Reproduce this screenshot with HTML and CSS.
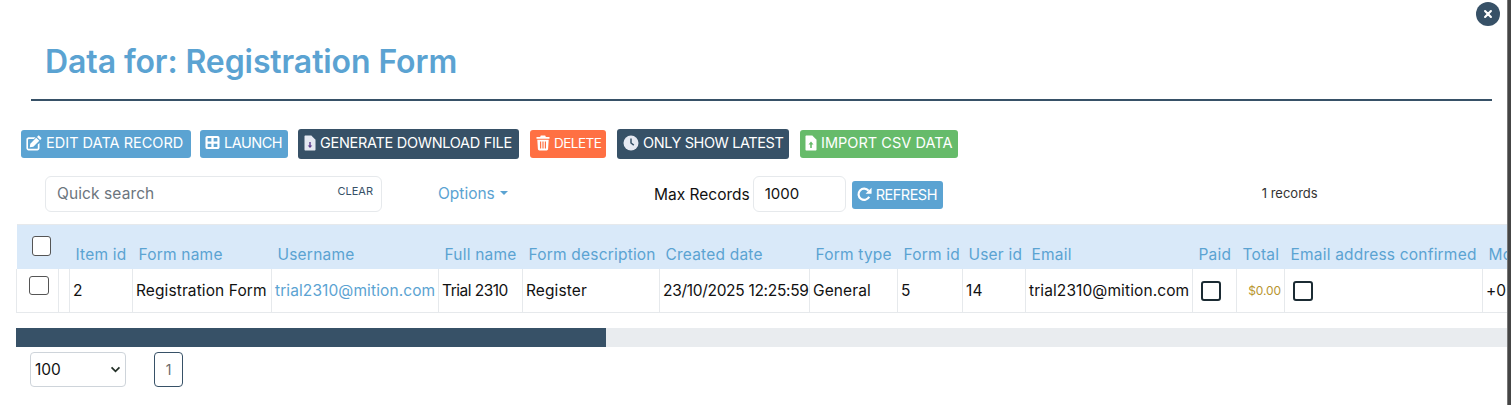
FILE: index.html
```html
<!DOCTYPE html>
<html lang="en">
<head>
<meta charset="utf-8">
<title>Data for: Registration Form</title>
<link rel="stylesheet" href="styles.css">
</head>
<body>
<div class="modal">
  <button class="close" aria-label="Close"><svg viewBox="0 0 12 12" width="10" height="10"><path d="M2.500 2.500l7 7M9.500 2.500l-7 7" stroke="#fff" stroke-width="2.600" stroke-linecap="round"/></svg></button>
  <header class="head"><h1>Data for: Registration Form</h1></header>
  <div class="toolbar">
    <a class="btn blue w170"><svg viewBox="0 0 16 16" width="16" height="16"><path fill="#fff" d="M2.600 2.300h7L7.900 4H2.900c-.5 0-.9.4-.9.9v8c0 .5.4.9.9.9h8c.5 0 .9-.4.9-.9V9.600l1.700-1.700v5.400c0 1.200-1 2.200-2.200 2.200H2.600C1.400 15.500.4 14.500.4 13.300V4.500c0-1.200 1-2.200 2.200-2.200zM13.200.8l2 2c.3.3.3.8 0 1.100l-1.100 1.100-3.100-3.100L12.100.8c.3-.3.8-.3 1.100 0zM10.200 2.700l3.100 3.100-6 6-3.500.5.500-3.500z"/></svg>EDIT DATA RECORD</a>
    <a class="btn blue w88"><svg viewBox="0 0 16 16" width="15" height="15"><path fill="#fff" fill-rule="evenodd" d="M2.500 1h11c1.100 0 2 .9 2 2v10c0 1.100-.9 2-2 2h-11c-1.100 0-2-.9-2-2V3c0-1.100.9-2 2-2zM2.800 3.300v3.500h4V3.300zm6.400 0v3.500h4V3.300zM2.800 9.200v3.500h4V9.200zm6.400 0v3.500h4V9.200z"/></svg>LAUNCH</a>
    <a class="btn dark w221"><svg viewBox="0 0 12 16" width="12" height="16"><path fill="#e6e9f2" d="M1.500.5h5.800l4.200 4.200v9.800c0 .6-.5 1-1 1h-9c-.6 0-1-.4-1-1v-13c0-.6.4-1 1-1z"/><path fill="#5b3a8c" d="M5.300 7h1.400v3.500h1.600L6 13l-2.300-2.500h1.600z"/></svg>GENERATE DOWNLOAD FILE</a>
    <a class="btn orange w76"><svg viewBox="0 0 14 16" width="14" height="16"><path fill="#fff" fill-rule="evenodd" d="M4.800.5h4.400l.7 1.500h3.600v1.800H.5V2h3.600zM1.300 4.800h11.400l-.6 9.300c0 .8-.7 1.400-1.500 1.400H3.400c-.8 0-1.500-.6-1.500-1.400zM4 6.500v7h1.200v-7zm2.400 0v7h1.200v-7zm2.400 0v7H10v-7z"/></svg>DELETE</a>
    <a class="btn dark w172"><svg viewBox="0 0 16 16" width="16" height="16"><circle cx="8" cy="8" r="7.500" fill="#e6e9f2"/><path d="M8 3.500V8l2.800 2.200" fill="none" stroke="#375167" stroke-width="1.500"/></svg>ONLY SHOW LATEST</a>
    <a class="btn green w158"><svg viewBox="0 0 12 16" width="12" height="16"><path fill="#fff" d="M1.500.5h5.800l4.200 4.200v9.800c0 .6-.5 1-1 1h-9c-.6 0-1-.4-1-1v-13c0-.6.4-1 1-1z"/><path fill="#66bb6a" d="M6 6.500l2.500 3H6.800V13H5.200V9.500H3.500z"/></svg>IMPORT CSV DATA</a>
  </div>
  <div class="controls">
    <div class="search"><span class="placeholder">Quick search</span><span class="clear">CLEAR</span></div>
    <a class="options">Options<i class="caret"></i></a>
    <label class="max">Max Records<span class="maxinput">1000</span></label>
    <a class="btn blue refresh"><svg viewBox="0 0 16 16" width="15" height="15"><path fill="none" stroke="#fff" stroke-width="2.300" d="M13 10.500A6 6 0 1 1 12.300 4"/><path fill="#fff" d="M15.500.8v6.400H9.100z"/></svg>REFRESH</a>
    <span class="count">1 records</span>
  </div>
  <div class="tablewrap">
    <table>
      <colgroup>
        <col class="c42"><col class="c11"><col class="c63"><col class="c139"><col class="c167"><col class="c84"><col class="c137"><col class="c150"><col class="c88"><col class="c65"><col class="c63"><col class="c167"><col class="c44"><col class="c48"><col class="c198"><col class="c100">
      </colgroup>
      <thead>
        <tr>
          <th><span class="cb head-cb"></span></th><th></th>
          <th>Item id</th><th>Form name</th><th>Username</th><th>Full name</th><th>Form description</th><th>Created date</th><th>Form type</th><th>Form id</th><th>User id</th><th>Email</th><th>Paid</th><th>Total</th><th>Email address confirmed</th><th>Mobile</th>
        </tr>
      </thead>
      <tbody>
        <tr>
          <td class="tdcheck"><span class="cb"></span></td><td></td>
          <td>2</td><td>Registration Form</td><td><a class="link">trial2310@mition.com</a></td><td class="tight">Trial 2310</td><td>Register</td><td class="date">23/10/2025 12:25:59</td><td>General</td><td>5</td><td>14</td><td>trial2310@mition.com</td>
          <td><span class="cb bold"></span></td><td class="money">$0.00</td><td><span class="cb bold"></span></td><td>+0</td>
        </tr>
      </tbody>
    </table>
  </div>
  <div class="hscroll"><div class="thumb"></div></div>
  <div class="pager">
    <div class="pagesize"><span>100</span><svg viewBox="0 0 12 8" width="11" height="7"><path d="M1.500 1.500L6 6l4.500-4.500" fill="none" stroke="#243028" stroke-width="2"/></svg></div>
    <a class="page">1</a>
  </div>
</div>
</body>
</html>
```
FILE: styles.css
```css
* { box-sizing: border-box; }
html, body { margin: 0; height: 100%; overflow: hidden; background: #fff; }
body { font-family: Inter, "Open Sans", "Liberation Sans", sans-serif; font-size: 15px; color: #111; }
.modal { position: relative; height: 405px; width: 1511px; border-right: 3px solid #454545; box-shadow: inset -1px 0 0 #777; overflow: hidden; padding: 38px 1px 0 0; }
.close { position: absolute; top: 2px; right: 8px; width: 24px; height: 24px; border: 0; border-radius: 50%; background: #375167; padding: 0; display: flex; align-items: center; justify-content: center; }
.head { margin: 0 15px 0 31px; height: 63px; border-bottom: 2px solid #375167; }
h1 { margin: 0; padding-left: 14px; font-size: 32px; line-height: 47px; font-weight: 600; color: #5ba3d2; letter-spacing: -0.1px; }
.toolbar { display: flex; gap: 10px; margin: 28px 0 0 21px; height: 30px; align-items: center; }
.btn { display: inline-flex; align-items: center; gap: 4px; height: 28px; padding: 0 0 2px 5px; border-radius: 3px; color: #fff; font-size: 14.500px; font-weight: 400; white-space: nowrap; }
.toolbar .btn { padding-bottom: 3px; }
.blue { background: #5ba3d2; }
.dark { background: #375167; height: 30px; }
.orange { background: #ff7043; }
.green { background: #66bb6a; }
.w170 { width: 170px; margin-right: -1px; letter-spacing: 0.02px; }
.w88 { width: 88px; letter-spacing: -0.5px; }
.w221 { width: 221px; padding-left: 6px; letter-spacing: -0.3px; }
.w76 { width: 76px; margin-left: 1px; padding-left: 6px; font-size: 13.500px; letter-spacing: -0.5px; }
.w172 { width: 172px; margin-left: 1px; padding-left: 6px; letter-spacing: -0.4px; }
.w158 { width: 158px; margin-left: 1px; letter-spacing: 0.03px; }
.controls { position: relative; display: flex; align-items: center; height: 36px; margin: 17px 0 0 45px; }
.search { width: 337px; height: 36px; border: 1px solid #e6e9ec; border-radius: 6px; display: flex; align-items: center; justify-content: space-between; padding: 0 8px 2px 11px; }
.placeholder { color: #6c757d; font-size: 15.500px; letter-spacing: 0.1px; }
.clear { color: #375167; font-size: 11px; font-weight: 400; margin-top: -4px; }
.options { margin-left: 56px; width: 216px; color: #5ba3d2; font-size: 15.500px; display: flex; align-items: center; padding-bottom: 2px; }
.caret { margin-left: 5px; border-top: 4px solid #5ba3d2; border-left: 4px solid transparent; border-right: 4px solid transparent; }
.max { display: flex; align-items: center; gap: 3px; font-size: 15.500px; color: #111; }
.maxinput { width: 93px; height: 36px; border: 1px solid #e6e9ec; border-radius: 6px; display: flex; align-items: center; padding: 0 0 2px 11px; font-size: 15px; }
.refresh { margin: 2px 0 0 6px; width: 91px; letter-spacing: -0.5px; }
.count { margin-left: 319px; font-size: 13px; color: #333; padding-bottom: 2px; }
.tablewrap { margin: 12px 0 0 16px; overflow: hidden; }
table { border-collapse: collapse; table-layout: fixed; width: 1566px; }
.c42 { width: 42px; } .c11 { width: 11px; } .c63 { width: 63px; } .c139 { width: 139px; } .c167 { width: 167px; } .c84 { width: 84px; } .c137 { width: 137px; } .c150 { width: 150px; } .c88 { width: 88px; } .c65 { width: 65px; } .c44 { width: 44px; } .c48 { width: 48px; } .c198 { width: 198px; } .c100 { width: 100px; }
thead tr { height: 44px; background: #d9e9f9; }
th { border-top: 1px solid #e6e9ec; text-align: left; vertical-align: bottom; font-weight: 400; color: #5ba3d2; font-size: 15.500px; padding: 0 0 5px 6px; white-space: nowrap; overflow: hidden; letter-spacing: 0.2px; }
td { height: 44px; border: 1px solid #e6e9ec; border-top: 0; padding: 0 3px; font-size: 15.500px; white-space: nowrap; overflow: hidden; letter-spacing: 0.1px; color: #111; }
.date { letter-spacing: -0.3px; }
.tight { letter-spacing: -0.5px; }
.cb { display: block; width: 20px; height: 19px; border: 1.500px solid #555; border-radius: 3px; background: #fff; }
.head-cb { margin: 0 0 8px 9px; height: 20px; width: 19px; }
.tdcheck .cb { margin: -9px 0 0 9px; }
.cb.bold { border: 2px solid #1b2b33; margin-left: 5px; height: 20px; margin-top: 2px; }
.money { color: #b8952f; font-size: 12px; text-align: right; letter-spacing: -0.1px; }
.link { color: #5ba3d2; }
.hscroll { margin: 15px 0 0 16px; height: 19px; background: #e9ecef; }
.thumb { width: 590px; height: 100%; background: #375167; }
.pager { display: flex; align-items: center; margin: 5px 0 0 30px; }
.pagesize { width: 96px; height: 35px; border: 1px solid #ced4da; border-radius: 4px; display: flex; align-items: center; justify-content: space-between; padding: 0 4px; font-size: 15.500px; }
.page { margin-left: 28px; width: 29px; height: 35px; border: 1px solid #375167; border-radius: 4px; display: flex; align-items: center; justify-content: center; font-size: 14px; color: #6b6b6b; }
```
